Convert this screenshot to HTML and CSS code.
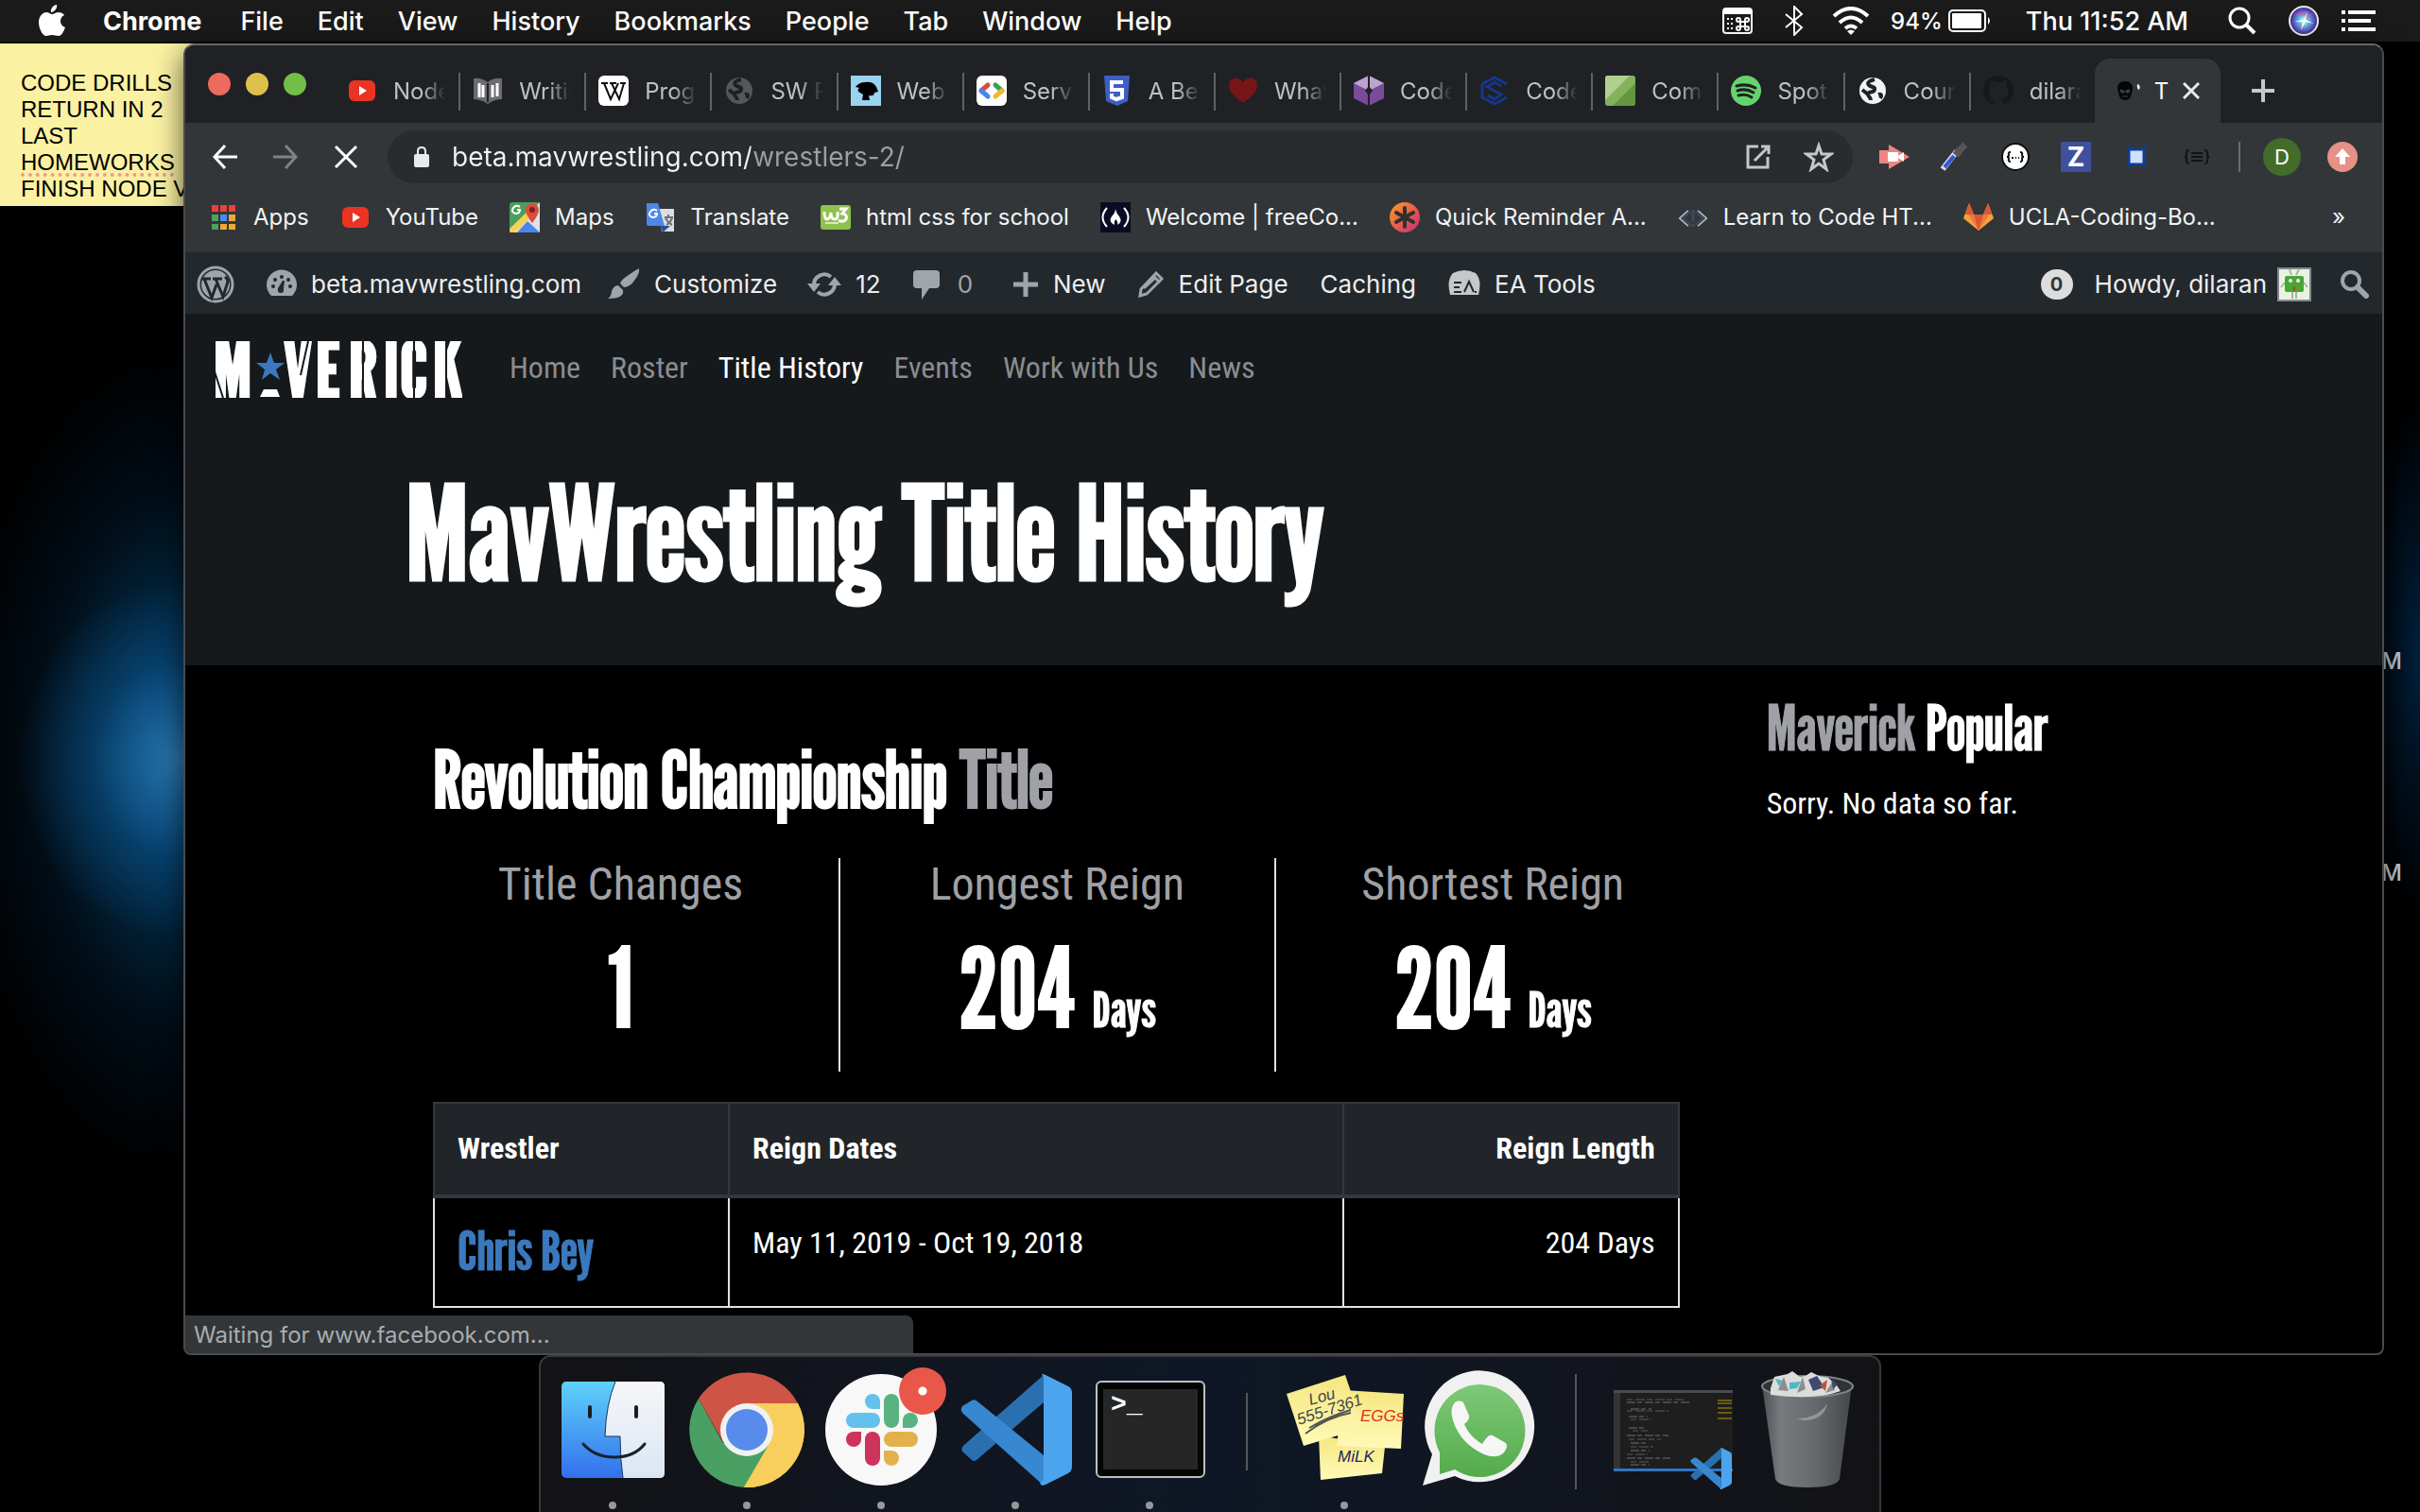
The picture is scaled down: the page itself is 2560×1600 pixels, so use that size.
FILE: index.html
```html
<!DOCTYPE html>
<html lang="en">
<head>
<meta charset="utf-8">
<title>Title History - MavWrestling</title>
<link rel="stylesheet" href="styles.css">
</head>
<body>
<svg class="defs" aria-hidden="true">
  <defs>
    <linearGradient id="gFinder" x1="0" y1="0" x2="0" y2="1"><stop offset="0" stop-color="#5fd2fb"/><stop offset="1" stop-color="#3370ec"/></linearGradient>
    <linearGradient id="gFace" x1="0" y1="0" x2="0" y2="1"><stop offset="0" stop-color="#f6f6f8"/><stop offset="1" stop-color="#dae7f3"/></linearGradient>
    <linearGradient id="gNote" x1="0" y1="0" x2="0" y2="1"><stop offset="0" stop-color="#f5e67f"/><stop offset="1" stop-color="#fffab8"/></linearGradient>
    <linearGradient id="gWa" x1="0" y1="0" x2="0" y2="1"><stop offset="0" stop-color="#7fc978"/><stop offset="1" stop-color="#54ab4b"/></linearGradient>
    <linearGradient id="gTrash" x1="0" y1="0" x2="1" y2="0"><stop offset="0" stop-color="#4c5054"/><stop offset=".2" stop-color="#777b7e"/><stop offset=".6" stop-color="#66696c"/><stop offset="1" stop-color="#45484b"/></linearGradient>
    <linearGradient id="gOrange" x1="0" y1="0" x2="1" y2="1"><stop offset="0" stop-color="#f5a12c"/><stop offset=".5" stop-color="#e8604a"/><stop offset="1" stop-color="#c22a78"/></linearGradient>
    <radialGradient id="gSiri"><stop offset="0" stop-color="#ffffff"/><stop offset=".35" stop-color="#5fc4e0"/><stop offset=".7" stop-color="#5a58c8"/><stop offset="1" stop-color="#33276e"/></radialGradient>
    <symbol id="youtube" viewBox="0 0 32 32"><rect x="2" y="5" width="28" height="22" rx="6" fill="#ea3323"/><path d="M13 11l8 5-8 5z" fill="#fff"/></symbol>
    <symbol id="globe" viewBox="0 0 32 32"><circle cx="16" cy="16" r="14" fill="currentColor"/><path d="M18 4c-4 1-9 3-6 6s7 1 6 5-6 1-7 4 3 3 3 7M5 15l5 4M22 20c3-1 4 1 2 4" fill="none" stroke="#202124" stroke-width="4"/></symbol>
    <symbol id="vscode" viewBox="0 0 118 118"><path d="M2 82l10 9q2 2 5 0L88 30V1L4 75q-4 3-2 7z" fill="#2a6fb0"/><path d="M2 34l10-6q3-2 6 1l70 57v32L3 42q-4-4-1-8z" fill="#3788d0"/><path d="M86 0q2 0 4 1l24 12q4 2 4 7v78q0 5-4 7l-24 12q-4 2-6-1l4-5V4z" fill="#4da4ee"/></symbol>
  </defs>
</svg>

<header class="menubar">
  <button class="apple" aria-label="Apple menu"><svg width="28" height="34" viewBox="0 0 28 34"><path d="M19 0c1 4-3 8-6 8-1-4 3-8 6-8zM14 10c2 0 4-2 7-2 2 0 5 1 6 3-6 3-5 11 1 13-2 5-4 9-7 9-3 0-4-1-7-1s-4 1-6 1C4 33 0 25 0 19 0 12 4 8 8 8c3 0 4 2 6 2z" fill="#fff"/></svg></button>
  <nav class="menus"><button class="app">Chrome</button><button>File</button><button>Edit</button><button>View</button><button>History</button><button>Bookmarks</button><button>People</button><button>Tab</button><button>Window</button><button>Help</button></nav>
  <div class="status-items">
    <svg width="32" height="28" viewBox="0 0 32 28"><rect x="1" y="1" width="30" height="26" rx="3" fill="none" stroke="#fff" stroke-width="2"/><path d="M1 2h30v5H1z" fill="#fff"/><path d="M5 12h6M5 17h6M5 22h6" stroke="#fff" stroke-width="2" stroke-dasharray="2 2"/><g fill="none" stroke="#fff" stroke-width="2"><path d="M19 15h5v5h-5z"/><circle cx="17" cy="13" r="2"/><circle cx="26" cy="13" r="2"/><circle cx="17" cy="22" r="2"/><circle cx="26" cy="22" r="2"/></g></svg>
    <svg class="bt" width="20" height="32" viewBox="0 0 20 32"><path d="M1 9l17 14-8 8V1l8 8L1 23" fill="none" stroke="#fff" stroke-width="2"/></svg>
    <svg class="wifi" width="40" height="30" viewBox="0 0 40 30"><g fill="none" stroke="#fff" stroke-width="4"><path d="M2 10q18-16 36 0"/><path d="M8 17q12-11 24 0"/><path d="M14 23q6-5 12 0"/></g><path d="M16 26q4-3 8 0l-4 4z" fill="#fff"/></svg>
    <span class="pct">94%</span>
    <svg class="battery" width="46" height="24" viewBox="0 0 46 24"><rect x="1" y="1" width="38" height="22" rx="4" fill="none" stroke="#fff" stroke-width="2"/><rect x="4" y="4" width="31" height="16" rx="1" fill="#fff"/><path d="M42 8q4 4 0 8z" fill="#fff"/></svg>
    <span class="clock">Thu 11:52 AM</span>
    <svg class="mag" width="30" height="30" viewBox="0 0 30 30"><circle cx="12" cy="12" r="10" fill="none" stroke="#fff" stroke-width="3"/><path d="M19 19l9 9" stroke="#fff" stroke-width="4"/></svg>
    <svg class="siri" width="32" height="32" viewBox="0 0 32 32"><circle cx="16" cy="16" r="15" fill="url(#gSiri)" stroke="#e8e8ee" stroke-width="2"/><path d="M5 9q12 4 22-2-9 10-20 16 8-8 18-6Q14 14 11 28q6-10 8-22" fill="#e94fa0" opacity=".5"/><path d="M6 17l10-2 4-9-2 9 9 4-9-2-5 9 2-9z" fill="#fff"/></svg>
    <svg width="36" height="22" viewBox="0 0 36 22"><path d="M7 2h29M7 11h24M7 20h29M0 2h4M0 11h4M0 20h4" stroke="#fff" stroke-width="4"/></svg>
  </div>
</header>

<main class="desktop">
  <aside class="sticky">CODE DRILLS<br>RETURN IN 2<br>LAST<br><span>HOMEWORKS</span><br>FINISH NODE V</aside>
  <span class="file-label first">M</span><span class="file-label second">M</span>

  <section class="window">
    <div class="tabstrip">
      <div class="lights"><button aria-label="Close"></button><button aria-label="Minimize"></button><button aria-label="Zoom"></button></div>
      <div class="tabs" role="tablist">
        <button role="tab" class="tab"><svg class="ico"><use href="#youtube"/></svg><span>Node</span></button>
        <button role="tab" class="tab"><svg class="ico" viewBox="0 0 32 32"><path d="M1 3q9-1 15 4 6-5 15-4v22q-8 0-15 5-7-5-15-5z" fill="#6b6c6e"/><path d="M16 8v20" stroke="#202124" stroke-width="2"/><g stroke="#fff" stroke-width="3" fill="none"><path d="M7 8v15M11 10v13M21 10v13M26 8v14"/></g></svg><span>Writing</span></button>
        <button role="tab" class="tab"><svg class="ico" viewBox="0 0 32 32"><rect width="32" height="32" rx="6" fill="#fff"/><path d="M3 8h7M12 8h7M23 8h6M6 8l7 17 8-17M14 8l8 17 5-17" fill="none" stroke="#111" stroke-width="2"/></svg><span>Prog</span></button>
        <button role="tab" class="tab dim"><svg class="ico"><use href="#globe"/></svg><span>SW Pr</span></button>
        <button role="tab" class="tab"><svg class="ico" viewBox="0 0 32 32"><path fill="#9bd2ef" d="M0 0h32v32H0z"/><path d="M5 12q4-5 10-5 9-1 12 5l2 5-4 1q0 4-6 3l1 5h-8l1-6-5-3q-1-3 1-4z"/></svg><span>Web</span></button>
        <button role="tab" class="tab"><svg class="ico" viewBox="0 0 32 32"><rect width="32" height="32" rx="6" fill="#fff"/><g stroke-width="5" stroke-linecap="round"><path d="M12 10l-7 6" stroke="#e04a3f"/><path d="M5 16l7 6" stroke="#4285f4"/><path d="M20 10l7 6" stroke="#36a257"/><path d="M27 16l-7 6" stroke="#f3b928"/></g></svg><span>Service</span></button>
        <button role="tab" class="tab"><svg class="ico" viewBox="0 0 32 32"><path d="M2 0h27l-2 27-11 5-12-5z" fill="#3d5fc4"/><path d="M22 7H10v8h11v8l-6 2-5-2v-4" fill="none" stroke="#fff" stroke-width="4"/></svg><span>A Beg</span></button>
        <button role="tab" class="tab"><svg class="ico" viewBox="0 0 32 32"><path d="M16 29C10 24 1 19 1 10 1 1 12 1 16 7c4-6 15-6 15 3 0 9-9 14-15 19z" fill="#761616"/></svg><span>What</span></button>
        <button role="tab" class="tab"><svg class="ico" viewBox="0 0 32 32"><path d="M16 0l16 8v16l-16 8-16-8V8z" fill="#7b4a9a"/><path d="M16 0l16 8-16 8L0 8z" fill="#bba5d0"/><path d="M16 0v32" stroke="#202124" stroke-width="2"/><path d="M16 11l4 5-4 5-4-5z" fill="#202124"/></svg><span>Code</span></button>
        <button role="tab" class="tab"><svg class="ico" viewBox="0 0 32 32"><path d="M29 9L16 2 3 9v14l13 7 13-7M23 11l-7-4-8 5 15 8-7 5-7-4" fill="none" stroke="#17368c" stroke-width="3"/></svg><span>Code</span></button>
        <button role="tab" class="tab"><svg class="ico" viewBox="0 0 32 32"><rect width="32" height="32" rx="3" fill="#83b15c"/><path d="M0 26V3q0-3 3-3h23z" fill="#b0cf91"/><path d="M8 32L32 8v20q0 4-4 4z" fill="#64963f"/></svg><span>Com</span></button>
        <button role="tab" class="tab"><svg class="ico" viewBox="0 0 32 32"><circle cx="16" cy="16" r="16" fill="#65d46e"/><g fill="none" stroke="#202124" stroke-linecap="round" stroke-width="3"><path d="M6 11q11-3 20 2M7 16q9-3 17 2M8 21q8-2 14 2"/></g></svg><span>Spot</span></button>
        <button role="tab" class="tab bright"><svg class="ico"><use href="#globe"/></svg><span>Cour</span></button>
        <button role="tab" class="tab"><svg class="ico" viewBox="0 0 32 32"><path d="M12 31v-4q-6 1-7-4 4 3 7 1Q5 22 6 14q0-2 2-4 0-3 0-5 3 0 5 2h6q2-2 5-2v5q7 12-4 14v7q11-3 12-15Q31 1 16 0 1 1 0 16q1 12 12 15z" fill="#17181a"/></svg><span>dilaran</span></button>
        <button role="tab" class="tab active" aria-selected="true"><svg class="ico" viewBox="0 0 32 32"><path d="M1 14Q1 6 9 6t8 8l-2 8q-2 4-6 4t-6-4z" fill="#050505"/><path d="M4 15l4 1v2H5zM14 15l-4 1v2h3zM6 22h6" stroke="#444" stroke-width="1" fill="#333"/><path d="M22 9q4 1 2 6-3-1-2-6z" fill="#fff"/></svg><span>T</span><svg class="x" width="18" height="18" viewBox="0 0 18 18"><path d="M1 1l16 16M17 1L1 17" stroke="#e8eaed" stroke-width="3"/></svg></button>
      </div>
      <button class="newtab" aria-label="New tab"><svg width="24" height="24" viewBox="0 0 24 24"><path d="M12 0v24M0 12h24" stroke="#c6c8ca" stroke-width="4"/></svg></button>
    </div>

    <div class="toolbar">
      <button aria-label="Back"><svg width="28" height="28" viewBox="0 0 28 28"><path d="M27 14H4M14 2L3 14l11 12" fill="none" stroke="#fff" stroke-width="3"/></svg></button>
      <button aria-label="Forward"><svg width="28" height="28" viewBox="0 0 28 28"><path d="M1 14h23M14 2l11 12-11 12" fill="none" stroke="#808386" stroke-width="3"/></svg></button>
      <button aria-label="Stop"><svg width="28" height="28" viewBox="0 0 28 28"><path d="M3 3l22 22M25 3L3 25" stroke="#fff" stroke-width="3"/></svg></button>
      <div class="omnibox">
        <svg width="16" height="22" viewBox="0 0 16 22"><rect y="8" width="16" height="14" rx="2" fill="#e8eaed"/><path d="M4 9V5q0-4 4-4t4 4v4" fill="none" stroke="#e8eaed" stroke-width="2"/></svg>
        <input type="text" aria-label="Address" value="beta.mavwrestling.com/wrestlers-2/">
        <button aria-label="Open"><svg width="28" height="28" viewBox="0 0 28 28"><path d="M14 3H3v22h21V14M17 3h8v8M24 4L10 18" fill="none" stroke="#c4c7ca" stroke-width="3"/></svg></button>
        <button aria-label="Bookmark this page"><svg width="32" height="32" viewBox="0 0 32 32"><path d="M16 4l3 9h10l-8 6 3 10-8-6-8 6 3-10-8-6h10z" fill="none" stroke="#c4c7ca" stroke-width="3"/></svg></button>
      </div>
      <button aria-label="Recorder"><svg class="ico" viewBox="0 0 32 32"><path d="M0 9h10V3l22 13-22 13v-6H0z" fill="#ee8580"/><path d="M9 11h11v4l6-4v10l-6-4v4H9z" fill="#fff"/></svg></button>
      <button aria-label="Color picker"><svg class="ico" viewBox="0 0 32 32"><path d="M3 29L18 10" stroke="#d7dbe5" stroke-width="6"/><path d="M5 27L15 15" stroke="#2d55d8" stroke-width="4"/><path d="M16 9l6 5M20 10L27 3" stroke="#555" stroke-width="7"/></svg></button>
      <button aria-label="JSON"><svg class="ico" viewBox="0 0 32 32"><circle cx="16" cy="16" r="14" fill="#fff" stroke="#111" stroke-width="2"/><path d="M11 11q-3 0-2 3 0 2-2 2 2 0 2 2-1 3 2 3M21 11q3 0 2 3 0 2 2 2-2 0-2 2 1 3-2 3M12 17h2M16 17h1M19 17h1" fill="none" stroke="#111" stroke-width="2"/></svg></button>
      <button aria-label="Z" class="zext"><span>Z</span></button>
      <button aria-label="Frame"><svg class="ico" viewBox="0 0 32 32"><path d="M2 8h28M2 24h28M8 2v28M24 2v28" stroke="#183d91" stroke-width="2" stroke-dasharray="2 3"/><rect x="8" y="8" width="16" height="16" fill="#cfe0fb" stroke="#123b95" stroke-width="3"/></svg></button>
      <button aria-label="Braces"><svg class="ico" viewBox="0 0 32 32"><path d="M8 9q-4 0-3 4 0 3-2 3 2 0 2 3-1 4 3 4M24 9q4 0 3 4 0 3 2 3-2 0-2 3 1 4-3 4M10 12h12M10 16h12M10 20h12" fill="none" stroke="#121314" stroke-width="2"/></svg></button>
      <i class="divider"></i>
      <button class="avatar" aria-label="Profile">D</button>
      <button class="update" aria-label="Update"><svg width="20" height="20" viewBox="0 0 20 20"><path d="M10 1l8 9h-5v8H7v-8H2z" fill="#fff"/></svg></button>
    </div>

    <nav class="bookmarks">
      <a href="#"><svg class="ico" viewBox="0 0 32 32"><g fill="#ea4335"><path d="M4 3h7v7H4zM13 3h7v7h-7zM22 3h7v7h-7z"/></g><path d="M4 13h7v7H4zM4 23h7v6H4z" fill="#4ca35b"/><path d="M13 13h7v7h-7z" fill="#4a8af4"/><path d="M22 13h7v7h-7zM13 23h7v6h-7zM22 23h7v6h-7z" fill="#f0a832"/></svg>Apps</a>
      <a href="#"><svg class="ico"><use href="#youtube"/></svg>YouTube</a>
      <a href="#"><svg class="ico" viewBox="0 0 32 32"><rect width="32" height="32" rx="3" fill="#4a9e5c"/><path d="M0 32L32 0v32z" fill="#dfe1e3"/><path d="M0 28L25 4l4 5L6 32H2q-2 0-2-4z" fill="#f7d255"/><path d="M8 32l11-12 13 12z" fill="#4a86ee"/><path d="M24 22q-7-9-7-14a7 7 0 0 1 14 0q0 5-7 14z" fill="#dd4b3e"/><circle cx="24" cy="8" r="3" fill="#7a211c"/><path d="M11 5q-4-3-7 1t2 6q5 0 5-4H8" fill="none" stroke="#fff" stroke-width="2"/></svg>Maps</a>
      <a href="#"><svg class="ico" viewBox="0 0 32 32"><path d="M14 7h16v24H17z" fill="#dcdee1"/><path d="M16 25h10l-8 7z" fill="#274f9f"/><path d="M20 16h9M24 13v3M22 24q5-3 6-8M21 17q3 5 7 7" fill="none" stroke="#6b7176" stroke-width="2"/><path d="M1 1h12l7 24H3q-2 0-2-2z" fill="#4d87e8"/><path d="M12 9q-4-3-7 1t2 6q5 0 5-4H9" fill="none" stroke="#fff" stroke-width="2"/></svg>Translate</a>
      <a href="#"><svg class="ico" viewBox="0 0 32 32"><rect y="3" width="32" height="26" rx="3" fill="#8fc14c"/><path d="M4 10q0 8 3 8t4-7q0 7 4 7t3-8M20 7h7l-4 5q6 1 4 6-3 4-8 1" fill="none" stroke="#fff" stroke-width="3"/><path d="M5 22h14" stroke="#d6eab9" stroke-width="2"/></svg>html css for school</a>
      <a href="#"><svg class="ico" viewBox="0 0 32 32"><path fill="#0a0a23" d="M0 0h32v32H0z"/><path d="M7 6q-9 10 0 20M25 6q9 10 0 20" fill="none" stroke="#fff" stroke-width="2"/><path d="M16 7q1 5 4 8 4 6-2 9 1-4-2-6-2 3-1 6-7-3-3-9 4-4 4-8z" fill="#fff"/></svg>Welcome | freeCo...</a>
      <a href="#"><svg class="ico" viewBox="0 0 32 32"><circle cx="16" cy="16" r="16" fill="url(#gOrange)"/><path d="M16 6v20M7 11l18 10M25 11L7 21" stroke="#32302f" stroke-width="4" stroke-linecap="round"/></svg>Quick Reminder A...</a>
      <a href="#"><svg class="ico" viewBox="0 0 32 32"><path d="M11 9L2 17l9 8M21 9l9 8-9 8" fill="none" stroke="#b9c0c8" stroke-width="2"/><path d="M13 10L5 17l8 7M19 10l8 7-8 7" fill="none" stroke="#3c4654" stroke-width="3"/><path d="M16 8v13M16 23v3" stroke="#3c4654" stroke-width="4"/></svg>Learn to Code HT...</a>
      <a href="#"><svg class="ico" viewBox="0 0 32 32"><path d="M16 30L0 17 6 1l5 12h10l5-12 6 16z" fill="#f2a33c"/><path d="M16 30L5 13h22z" fill="#ec7a3b"/><path d="M16 30L11 13h10zM6 1l5 12H2zM26 1l-5 12h9z" fill="#dd5533"/></svg>UCLA-Coding-Bo...</a>
      <button class="more" aria-label="More bookmarks">»</button>
    </nav>

    <nav class="adminbar">
      <a href="#" aria-label="WordPress"><svg width="40" height="40" viewBox="0 0 40 40"><circle cx="20" cy="20" r="18" fill="none" stroke="#a0a5aa" stroke-width="3"/><circle cx="20" cy="20" r="15" fill="#a0a5aa"/><path d="M6 14h9M17 14h10M8 14l8 20 5-14M20 14l8 19 5-16q0-3-3-5" fill="none" stroke="#23282d" stroke-width="3"/></svg></a>
      <a href="#" class="site"><svg class="ico" viewBox="0 0 32 32"><path d="M5 28a16 16 0 1 1 22 0z" fill="#a0a5aa"/><g fill="#23282d"><circle cx="7" cy="18" r="2"/><circle cx="9" cy="11" r="2"/><circle cx="16" cy="8" r="2"/><circle cx="23" cy="11" r="2"/><circle cx="25" cy="18" r="2"/><path d="M17 12h2l-1 8q1 5-3 5t-3-5z"/></g></svg>beta.mavwrestling.com</a>
      <a href="#"><svg width="34" height="34" viewBox="0 0 34 34"><path d="M33 0q1 5-5 13-5 7-11 7l-4-4q1-4 9-9 7-5 11-7zM11 18l5 5q1 6-6 8-4 1-10 1 4-3 4-8 2-6 7-6z" fill="#a0a5aa"/></svg>Customize</a>
      <a href="#" class="updates"><svg width="36" height="32" viewBox="0 0 36 32"><path d="M7 17a11 11 0 0 1 18-9M29 15a11 11 0 0 1-18 9" fill="none" stroke="#a0a5aa" stroke-width="4"/><path d="M0 15h14l-7 9zM22 17h14l-7-9z" fill="#a0a5aa"/></svg>12</a>
      <a href="#" class="muted"><svg width="28" height="32" viewBox="0 0 28 32"><path d="M4 1h20q4 0 4 4v11q0 4-4 4h-7L9 32V20H4q-4 0-4-4V5q0-4 4-4z" fill="#a0a5aa"/></svg>0</a>
      <a href="#"><svg width="28" height="28" viewBox="0 0 28 28"><path d="M14 1v26M1 14h26" stroke="#a0a5aa" stroke-width="5"/></svg>New</a>
      <a href="#"><svg width="28" height="28" viewBox="0 0 28 28"><path d="M19 2l6 6L9 24l-7 2 1-7z" fill="none" stroke="#a0a5aa" stroke-width="3"/><path d="M16 5l7 7M6 18L18 7" stroke="#a0a5aa" stroke-width="3"/></svg>Edit Page</a>
      <a href="#">Caching</a>
      <a href="#"><svg class="ea" width="34" height="30" viewBox="0 0 34 30"><path d="M2 26Q-2 10 5 3q12-6 24 0 7 7 3 23z" fill="#c5c7c9"/><path d="M6 13h8M6 18h6M6 23h8M17 23l5-11 5 11M28 23h2" fill="none" stroke="#23282d" stroke-width="2"/></svg>EA Tools</a>
      <span class="spacer"></span>
      <b class="count">0</b>
      <a href="#" class="howdy">Howdy, dilaran<svg width="36" height="36" viewBox="0 0 36 36"><path fill="#e8f4e0" stroke="#84888c" stroke-width="2" d="M1 1h34v34H1z"/><path d="M15 8l-2-6M20 8l3-6M16 26v7M20 26v7M8 16l-4 5M28 16l4 5" stroke="#a9b5a2" stroke-width="2"/><rect x="8" y="9" width="20" height="17" rx="2" fill="#4aa535"/><circle cx="14" cy="14" r="2" fill="#eef"/><circle cx="22" cy="14" r="2" fill="#eef"/><path d="M17 20h2v5h-2z" fill="#b5472b"/></svg></a>
      <a href="#" aria-label="Search"><svg width="30" height="30" viewBox="0 0 30 30"><circle cx="11" cy="11" r="9" fill="none" stroke="#a0a5aa" stroke-width="4"/><path d="M18 18l9 9" stroke="#a0a5aa" stroke-width="6" stroke-linecap="round"/></svg></a>
    </nav>

    <div class="site-head">
      <nav class="site-nav">
        <a href="#" class="brand" aria-label="Maverick"><svg width="264" height="60" viewBox="0 0 264 60"><text y="60" x="1">M</text><text y="60" x="75 109 144 181 198 233">VERICK</text><path d="M61 12l4 11h11l-9 7 4 11-10-7-9 7 3-11-9-7h11z" fill="#3b78bd"/><path d="M54 51h14l3 8H50z" fill="#fff"/><g stroke="#15191c" stroke-width="2" fill="none"><path d="M0 26l11 34M93 36l8-36M159 0v60M213 0v22M213 40v20M247 0v60"/></g></svg></a>
        <a href="#">Home</a><a href="#">Roster</a><a href="#" class="current">Title History</a><a href="#">Events</a><a href="#">Work with Us</a><a href="#">News</a>
      </nav>
      <h1>MavWrestling Title History</h1>
    </div>

    <div class="content">
      <section class="titles">
        <h2>Revolution Championship <span>Title</span></h2>
        <div class="stats">
          <div><h3>Title Changes</h3><p>1</p></div>
          <div><h3>Longest Reign</h3><p>204 <small>Days</small></p></div>
          <div><h3>Shortest Reign</h3><p>204 <small>Days</small></p></div>
        </div>
        <table>
          <thead><tr><th class="c1">Wrestler</th><th class="c2">Reign Dates</th><th class="c3">Reign Length</th></tr></thead>
          <tbody><tr><td><a href="#">Chris Bey</a></td><td>May 11, 2019 - Oct 19, 2018</td><td class="c3">204 Days</td></tr></tbody>
        </table>
      </section>
      <aside class="popular">
        <h2><span>Maverick</span> Popular</h2>
        <p>Sorry. No data so far.</p>
      </aside>
    </div>
    <div class="loading">Waiting for www.facebook.com...</div>
  </section>

  <nav class="dock">
    <button class="run" aria-label="Finder"><svg viewBox="0 0 122 124"><rect x="7" y="11" width="109" height="102" rx="5" fill="url(#gFinder)"/><path d="M64 11h47q5 0 5 5v92q0 5-5 5H72q-3-20-3-44H53q1-34 11-58z" fill="url(#gFace)"/><path d="M64 11q-10 24-11 58h16q0 24 3 44" fill="none" stroke="#16345e" stroke-width="1"/><path d="M37 38v10M86 38v10" stroke="#1c1c20" stroke-width="4" stroke-linecap="round"/><path d="M30 77q12 14 33 14t32-14" fill="none" stroke="#17202e" stroke-width="3" stroke-linecap="round"/></svg></button>
    <button class="run" aria-label="Chrome"><svg viewBox="0 0 122 124"><path d="M61 62L10 29A61 61 0 0 1 115 34z" fill="#ce5546"/><path d="M61 62L115 34A61 61 0 0 1 58 123z" fill="#f8cf5c"/><path d="M61 62l23 16-26 45A61 61 0 0 1 10 29l26 47z" fill="#4a9f62"/><path d="M10 29l26 46 30-40 49-1z" fill="#ce5546"/><path d="M61 34h54a61 61 0 0 1-57 89l28-47z" fill="#f8cf5c"/><circle cx="61" cy="62" r="28" fill="#f1f1f1"/><circle cx="61" cy="62" r="22" fill="#588bec"/></svg></button>
    <button class="run" aria-label="Slack"><svg viewBox="0 0 122 124"><circle cx="61" cy="62" r="59" fill="#f8f8f8"/><g fill="#63c1eb"><path d="M60 40V32a8 8 0 0 0-16 0 8 8 0 0 0 8 8z"/><rect x="24" y="44" width="36" height="16" rx="8"/></g><g fill="#5ab281"><rect x="64" y="24" width="16" height="36" rx="8"/><path d="M84 60V52a8 8 0 1 1 8 8z"/></g><g fill="#cc345c"><rect x="44" y="64" width="16" height="36" rx="8"/><path d="M40 64V72a8 8 0 1 1-8-8z"/></g><g fill="#e3b14c"><rect x="64" y="64" width="36" height="16" rx="8"/><path d="M64 84h8a8 8 0 1 1-8 8z"/></g></svg><i class="badge"></i></button>
    <button class="run" aria-label="Code"><svg viewBox="-3 -3 122 124"><use href="#vscode" width="118" height="118"/></svg></button>
    <button class="run term" aria-label="Terminal"><svg viewBox="0 0 122 124"><rect x="5" y="11" width="114" height="101" rx="5" fill="#050505" stroke="#b9c4c3" stroke-width="2"/><path d="M12 19h100v85H12z" fill="#262626"/></svg><code>&gt;_</code></button>
    <i class="sep short"></i>
    <button class="run" aria-label="Stickies"><svg viewBox="0 0 122 124"><path d="M34 68l70 12-3 28-65 7z" fill="url(#gNote)"/><path d="M60 20l64 4-3 58-68-3z" fill="url(#gNote)"/><path d="M0 24L62 4l19 56-63 19z" fill="url(#gNote)"/><path d="M20 66q22-17 48-22M24 60q20-12 44-19" fill="none" stroke="#555" stroke-width="2"/><g class="hand"><text x="25" y="36" transform="rotate(-15 25 36)" fill="#444">Lou</text><text x="13" y="57" transform="rotate(-18 13 57)" fill="#444">555-7361</text><text x="78" y="53" fill="#e02d1c">EGGs</text><text x="54" y="96" fill="#23285e">MiLK</text></g></svg></button>
    <button aria-label="WhatsApp"><svg viewBox="0 0 122 124"><path d="M2 121L12 88A58 59 0 1 1 36 111z" fill="#f1f1f1"/><path d="M20 86A48 49 0 1 1 36 104l-16 5z" fill="url(#gWa)"/><path d="M34 36q4-7 11-3l6 14q1 4-5 9 5 13 19 21 7-12 11-9l14 8q3 4-3 11-8 6-20 1-25-11-33-36-3-10 0-16z" fill="#f6f6f6"/></svg></button>
    <i class="sep"></i>
    <button aria-label="Minimized window"><svg viewBox="0 0 122 124"><rect x="-2" y="20" width="126" height="86" fill="#1e1e1e"/><path d="M-2 20h126v3H-2z" fill="#4b4b4d"/><path d="M-2 23h7v80h-7z" fill="#333"/><path d="M-2 103h126v3H-2z" fill="#2f74c4"/><g stroke-width="1" opacity=".8"><path d="M12 33h68M16 40h22M14 48h20M14 60h18M12 68h44M16 76h18M16 84h20M12 92h46M16 99h20" stroke="#7189a2" stroke-dasharray="9 2 5 3"/><path d="M12 30h60M12 42h44M16 51h22M18 63h16M14 72h34M16 80h24M12 88h22M16 96h20" stroke="#7e6346" stroke-dasharray="6 3 10 2"/></g><path d="M108 31h15M108 34h15M108 39h15M108 44h15M108 50h15" stroke="#6b5b11" stroke-width="2"/><use href="#vscode" x="79" y="81" width="44" height="44"/></svg></button>
    <button aria-label="Trash"><svg viewBox="0 0 122 124"><path d="M13 14l14 100q3 9 34 9t34-9l13-100q-47 24-95 0z" fill="url(#gTrash)"/><ellipse cx="61" cy="16" rx="48" ry="11" fill="#303236" stroke="#7f8488" stroke-width="2"/><path d="M22 18l4-12 14-3 5-3 8 6 6-1 6-4 8 4 10 2 9 8 4 6q-26 10-74 4z" fill="#dcdcda"/><path d="M30 20l6-14 5 15zM56 6l-6 17 9-4zM88 10l-8 13 10-3z" fill="#8c8d8c"/><path d="M42 12l12-1-4 7-8 1zM27 8l8 2-4 6z" fill="#4bb8c7"/><path d="M62 9l9-4 8 12-12 4zM86 8l7 6-5 5z" fill="#3d4a72"/><path d="M74 15l8-6-2 12z" fill="#b0573e"/><path d="M50 50q22 0 32-16-3 18-26 18z" fill="#a7aaac" opacity=".7"/></svg></button>
  </nav>
</main>
</body>
</html>
```
FILE: styles.css
```css
* { box-sizing: border-box; }
html, body { height: 100%; }
body { margin: 0; display: flex; flex-direction: column; overflow: hidden; background: #000; color: #fff; font-family: Inter, "Liberation Sans", sans-serif; }
button { padding: 0; border: 0; background: none; color: inherit; font: inherit; display: flex; align-items: center; justify-content: center; }
a { color: inherit; text-decoration: none; }
h1, h2, h3, p { margin: 0; font-weight: 400; }
svg { display: block; flex: none; }
.defs { position: absolute; width: 0; height: 0; }
.ico { width: 32px; height: 32px; }

/* system menu bar */
.menubar { display: flex; align-items: center; height: 44px; padding: 0 47px 0 41px; background: #1a1a1a; font-size: 27px; font-weight: 500; flex: none; }
.menus { display: flex; gap: 36px; margin-left: 40px; }
.menus .app { font-weight: 700; margin-right: 5px; }
.status-items { display: flex; align-items: center; margin-left: auto; }
.bt { margin-left: 34px; }
.wifi { margin-left: 30px; }
.pct { margin-left: 22px; font-size: 24px; }
.battery { margin-left: 6px; }
.clock { margin-left: 36px; }
.mag { margin-left: 42px; }
.siri { margin: 0 24px 0 34px; }

/* desktop */
.desktop { position: relative; flex: 1; background:
  radial-gradient(170px 190px at 190px 760px, #2a77ad 0, #1c68a0cc 25%, #0c528c77 55%, #0a4a8000 100%),
  radial-gradient(240px 440px at 194px 760px, #014476 0, #02304fcc 35%, #02182a88 65%, #02102000 100%),
  radial-gradient(60px 280px at 100% 650px, #01203c 0, #00000000 100%),
  #000; }
.sticky { position: absolute; left: 0; top: 2px; width: 210px; height: 172px; padding: 28px 0 0 22px; background: #fbf1a2; color: #000; font: 24px/28px "Liberation Sans", Arial, sans-serif; white-space: nowrap; overflow: hidden; }
.sticky span { text-decoration: underline dotted #ef9a92 4px; text-underline-offset: 3px; text-decoration-skip-ink: none; }
.file-label { position: absolute; right: 19px; font-size: 24px; font-weight: 500; color: #c8ccd0; }
.first { top: 641px; }
.second { top: 865px; }

/* browser window */
.window { position: absolute; left: 194px; right: 38px; top: 2px; bottom: 166px; display: flex; flex-direction: column; overflow: hidden; background: #000; border: 2px solid #4a4b4c; border-top-color: #68696a; border-radius: 12px 12px 8px 8px; box-shadow: 0 10px 30px #000a; }
.tabstrip { display: flex; height: 82px; align-items: flex-end; background: #202124; flex: none; }
.lights { display: flex; gap: 16px; width: 156px; padding: 0 0 29px 24px; }
.lights button { width: 24px; height: 24px; border-radius: 50%; background: #ec6a5e; }
.lights button:nth-child(2) { background: #e0c04d; }
.lights button:nth-child(3) { background: #72be47; }
.tabs { display: grid; grid-template-columns: repeat(15, minmax(0, 1fr)); flex: 1; min-width: 0; }
.tab { min-width: 0; height: 68px; gap: 17px; padding: 0 14px 0 15px; justify-content: flex-start; position: relative; font-size: 24px; color: #bdc1c6; }
.tab span { flex: 1; overflow: hidden; white-space: nowrap; text-align: left; -webkit-mask-image: linear-gradient(90deg, #000 55%, transparent); mask-image: linear-gradient(90deg, #000 55%, transparent); }
.tab + .tab::before { content: ""; position: absolute; left: 0; top: 15px; height: 40px; width: 2px; background: #606164; }
.tab.active::before { display: none; }
.tab.dim svg { color: #54575a; }
.tab.bright svg { color: #f1f3f4; }
.tab.active { background: #323639; border-radius: 16px 16px 0 0; color: #fff; padding: 0 22px 0 23px; gap: 8px; }
.tab.active span { -webkit-mask-image: none; mask-image: none; }
.newtab { width: 171px; height: 68px; justify-content: flex-start; padding-left: 33px; }
.toolbar { display: flex; align-items: center; height: 72px; padding: 0 26px 0 26px; gap: 32px; background: #323639; flex: none; }
.toolbar > button { width: 32px; height: 32px; flex: none; }
.omnibox { flex: 1; display: flex; align-items: center; height: 56px; margin: 0 -4px 0 -4px; padding: 0 20px 0 28px; gap: 24px; border-radius: 28px; background: #282c2f; }
.omnibox button { width: 32px; height: 32px; margin-left: 8px; }
.omnibox input { flex: 1; min-width: 0; height: 40px; padding: 0; border: 0; outline: 0; font: 28px Inter, sans-serif; -webkit-text-fill-color: transparent; background: linear-gradient(90deg, #f1f3f4 316px, #9aa0a6 316px); -webkit-background-clip: text; background-clip: text; }
.toolbar .zext { background: #41509c; font-weight: 700; font-size: 28px; }
.divider { width: 2px; height: 32px; margin: 0 -4px 0 -4px; background: #6a6d70; }
.toolbar .avatar { width: 40px; height: 40px; margin: 0 -4px 0 -4px; border-radius: 50%; background: #436c2a; font-size: 22px; }
.toolbar .update { border-radius: 50%; background: #e79085; }
.bookmarks { display: flex; align-items: center; height: 65px; padding: 0 26px 10px 24px; gap: 33px; background: #323639; font-size: 24px; color: #f1f3f4; white-space: nowrap; flex: none; }
.bookmarks a { display: flex; align-items: center; gap: 16px; }
.more { width: 30px; margin-left: auto; margin-right: 5px; }

/* wordpress admin bar */
.adminbar { display: flex; align-items: center; height: 65px; padding: 2px 14px 0 12px; gap: 34px; background: #23282d; font-size: 26px; color: #eee; white-space: nowrap; flex: none; }
.adminbar a { display: flex; align-items: center; gap: 15px; }
.adminbar .site { margin-right: -6px; }
.adminbar .updates { margin-left: -2px; }
.adminbar .muted { color: #a0a5aa; gap: 19px; margin-right: 8px; }
.spacer { flex: 1; }
.count { display: flex; align-items: center; justify-content: center; width: 34px; height: 32px; border-radius: 16px; background: #ddd; color: #32373c; font-size: 20px; margin-right: -11px; }
.adminbar .howdy { gap: 11px; margin-right: -3px; }

/* site */
.site-head { height: 372px; background: #15191c; flex: none; }
.site-nav { display: flex; align-items: center; height: 114px; padding-left: 29px; gap: 32px; font: 32px "Roboto Condensed", Roboto, sans-serif; color: #8b8d8f; }
.site-nav .current { color: #fff; }
.brand { margin-right: 18px; padding-top: 4px; }
.brand text { font: 700 83px "League Gothic", "Roboto Condensed", sans-serif; fill: #fff; }
h1 { padding: 34px 0 0 233px; font: 138px/166px "League Gothic", "Roboto Condensed", sans-serif; -webkit-text-stroke: 3px; }
.content { display: grid; grid-template-columns: 1380fr 713fr; padding-left: 230px; }
.titles { padding: 72px 30px 0 32px; }
h2 { font: 84px/98px "League Gothic", "Roboto Condensed", sans-serif; -webkit-text-stroke: 2px; }
h2 span { color: #9fa1a6; }
.stats { display: grid; grid-template-columns: repeat(3, 1fr); margin: 34px -32px 32px; text-align: center; }
.stats div { height: 226px; }
.stats div + div { border-left: 2px solid #dee2e6; }
.stats h3 { font: 48px/56px "Roboto Condensed", Roboto, sans-serif; color: #9fa1a6; }
.stats p { font: 116px/144px "League Gothic", "Roboto Condensed", sans-serif; margin-top: 9px; -webkit-text-stroke: 2px; }
.stats small { font-size: 52px; -webkit-text-stroke: 1px; }
table { width: 100%; border-collapse: collapse; font: 32px/48px "Roboto Condensed", Roboto, sans-serif; }
th, td { padding: 23px 24px 25px; text-align: left; vertical-align: top; border: 2px solid #dee2e6; }
th { background: #212529; border: 2px solid #32383e; border-bottom-width: 4px; }
.c1 { width: 312px; }
.c2 { width: 650px; }
th.c3, td.c3 { text-align: right; }
td a { font: 58px/64px "League Gothic", "Roboto Condensed", sans-serif; color: #3b78bd; -webkit-text-stroke: 1px; }
.popular { padding: 27px 0 0 62px; font: 32px/48px "Roboto Condensed", Roboto, sans-serif; }
.popular h2 { font-size: 66px; line-height: 78px; margin-bottom: 17px; -webkit-text-stroke: 1px; }
.loading { position: absolute; left: 0; bottom: 0; width: 770px; height: 40px; padding-left: 9px; border-radius: 0 8px 0 0; background: #323639; color: #a9acae; font-size: 24px; line-height: 42px; }

/* dock */
.dock { position: absolute; left: 50%; bottom: 0; width: 1420px; margin-left: -710px; height: 166px; display: flex; justify-content: center; padding-top: 15px; background: linear-gradient(90deg, #131316, #0f1726 50%, #131316); border: 2px solid #37383d; border-bottom: 0; border-radius: 12px 12px 0 0; }
.dock button { position: relative; width: 142px; height: 124px; }
.dock svg { width: 122px; height: 124px; overflow: visible; }
.run::after { content: ""; position: absolute; left: 67px; bottom: -22px; width: 8px; height: 8px; border-radius: 50%; background: #98989b; }
.badge { position: absolute; right: 2px; top: -4px; width: 50px; height: 50px; border-radius: 50%; background: radial-gradient(circle, #fff 4px, #e9574b 5px); }
.term code { position: absolute; left: 30px; top: 20px; font: 700 28px "Liberation Mono", monospace; }
.hand { font: italic 17px "Liberation Sans", sans-serif; }
.sep { width: 64px; height: 122px; margin-top: 3px; background: linear-gradient(#55565b, #55565b) center / 2px 100% no-repeat; }
.sep.short { height: 82px; margin-top: 23px; }
```
